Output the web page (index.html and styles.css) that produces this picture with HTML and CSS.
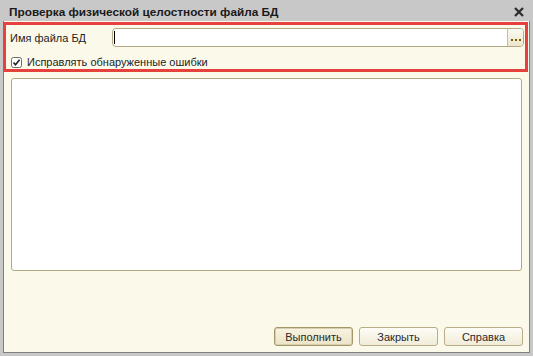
FILE: index.html
```html
<!DOCTYPE html>
<html lang="ru">
<head>
  <meta charset="UTF-8" />
  <title>Проверка физической целостности файла БД</title>
  <link rel="stylesheet" href="styles.css">
</head>
<body>
  <div class="window">
    <div class="titlebar">
      <span class="title">Проверка физической целостности файла БД</span>
      <svg class="close" width="10" height="10" viewBox="0 0 10 10">
        <path d="M1 1 L9 9 M9 1 L1 9" stroke="#2b2b2b" stroke-width="2.2" fill="none" />
      </svg>
    </div>

    <div class="client">
      <div class="params">
        <div class="row">
          <label class="field-label">Имя файла БД</label>
          <div class="input-box">
            <span class="caret"></span>
            <span class="select-btn">
              <svg width="10" height="3" viewBox="0 0 10 3">
                <rect x="0" y="0" width="2" height="2" fill="#7a5c00" />
                <rect x="4" y="0" width="2" height="2" fill="#7a5c00" />
                <rect x="8" y="0" width="2" height="2" fill="#7a5c00" />
              </svg>
            </span>
          </div>
        </div>
        <div class="row check-row">
          <svg class="checkbox" width="11" height="11" viewBox="0 0 11 11">
            <rect x="0.5" y="0.5" width="10" height="10" rx="2" fill="#fff" stroke="#6e6a5e" />
            <path d="M2.5 5.5 L4.5 7.8 L8.6 2.8" stroke="#222" stroke-width="1.6" fill="none" />
          </svg>
          <span>Исправлять обнаруженные ошибки</span>
        </div>
      </div>

      <div class="memo"></div>

      <div class="buttons">
        <button class="btn btn-default">Выполнить</button>
        <button class="btn">Закрыть</button>
        <button class="btn">Справка</button>
      </div>
    </div>
  </div>
</body>
</html>
```

FILE: styles.css
```css
* {
  margin: 0;
  padding: 0;
  box-sizing: border-box;
  font-family: "Liberation Sans", Arial, sans-serif;
}

html, body {
  width: 533px;
  height: 357px;
  background: #ffffff;
  overflow: hidden;
}

.window {
  height: 356px;
  background: #c8c8c8;
  padding: 0 3px 3px 3px;
  display: flex;
  flex-direction: column;
}

.titlebar {
  height: 21px;
  display: flex;
  align-items: center;
  justify-content: space-between;
  padding: 2px 6px 0 6px;
  flex-shrink: 0;
}

.title {
  font-size: 11.8px;
  font-weight: bold;
  color: #1a1a1a;
}

.close {
  display: block;
  margin-top: 1px;
}

.client {
  flex: 1;
  background: #fbf9ea;
  border: 1px solid #808080;
  border-top: none;
  display: flex;
  flex-direction: column;
}

.params {
  border: 3px solid #e5413f;
  margin: 1px 1px 0 -1px;
  height: 50px;
  padding: 3px 1px 0 4px;
}

.row {
  display: flex;
  align-items: center;
  font-size: 11px;
  color: #1e1e1e;
}

.field-label {
  width: 102px;
}

.input-box {
  flex: 1;
  height: 19px;
  background: #fff;
  border: 1px solid #b4a983;
  border-radius: 4px;
  display: flex;
  align-items: center;
  justify-content: space-between;
}

.caret {
  width: 1px;
  height: 13px;
  background: #000;
  margin-left: 1px;
}

.select-btn {
  width: 16px;
  height: 17px;
  border-left: 1px solid #c9bf9c;
  background: linear-gradient(#fbfaf2, #ece6cc);
  border-radius: 0 3px 3px 0;
  display: flex;
  align-items: flex-end;
  justify-content: center;
  padding-bottom: 4px;
}

.select-btn svg {
  display: block;
}

.check-row {
  margin-top: 9px;
  padding-left: 1px;
}

.checkbox {
  display: block;
  margin-right: 5px;
}

.memo {
  height: 193px;
  margin: 6px 7px 0 7px;
  background: #fff;
  border: 1px solid #b4a983;
  border-radius: 3px;
}

.buttons {
  margin-top: auto;
  display: flex;
  justify-content: flex-end;
  gap: 6px;
  padding: 0 6px 6px 0;
}

.btn {
  width: 79px;
  height: 19px;
  font-size: 11px;
  color: #2a2a2a;
  background: linear-gradient(#fdfcf6, #f1ecd9);
  border: 1px solid #b8ad88;
  border-radius: 3px;
}

.btn-default {
  border: 1px solid #a39669;
  box-shadow: inset 0 0 0 1px #d8cfae;
  background: linear-gradient(#f8f4e2, #ece4c8);
}
```
